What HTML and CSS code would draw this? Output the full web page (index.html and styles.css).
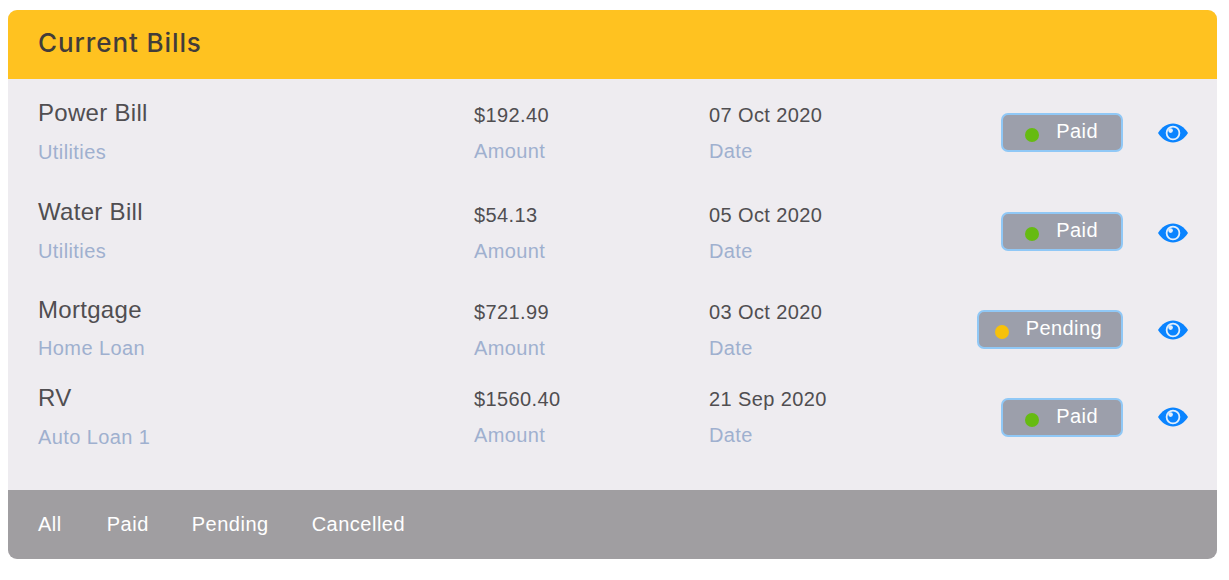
FILE: index.html
```html
<!DOCTYPE html>
<html>

<head>
    <title>Current Bills</title>
    <link rel="stylesheet" href="styles.css">
</head>

<body>

    <svg class="icon-defs" width="0" height="0">
        <symbol id="eye" viewBox="0 0 30 20">
            <path d="M0 10C4 4 9 .5 15 .5S26 4 30 10C26 16 21 19.500 15 19.500S4 16 0 10Z" fill="#0a84ff" />
            <circle cx="15" cy="10" r="6.400" fill="none" stroke="#e3effb" stroke-width="1.800" />
            <circle cx="12.600" cy="7.600" r="2.300" fill="#e3effb" />
        </symbol>
    </svg>

    <div class="card">
        <div class="card-header">
            <h1>Current Bills</h1>
        </div>

        <div class="bills">
            <div class="bill bill-first">
                <div class="bill-name">
                    <div class="title">Power Bill</div>
                    <div class="sub">Utilities</div>
                </div>
                <div class="bill-col amount">
                    <div class="value">$192.40</div>
                    <div class="sub">Amount</div>
                </div>
                <div class="bill-col date">
                    <div class="value">07 Oct 2020</div>
                    <div class="sub">Date</div>
                </div>
                <div class="status"><span class="dot dot-paid"></span>Paid</div>
                <svg class="eye"><use href="#eye" /></svg>
            </div>

            <div class="bill bill-second">
                <div class="bill-name">
                    <div class="title">Water Bill</div>
                    <div class="sub">Utilities</div>
                </div>
                <div class="bill-col amount">
                    <div class="value">$54.13</div>
                    <div class="sub">Amount</div>
                </div>
                <div class="bill-col date">
                    <div class="value">05 Oct 2020</div>
                    <div class="sub">Date</div>
                </div>
                <div class="status"><span class="dot dot-paid"></span>Paid</div>
                <svg class="eye"><use href="#eye" /></svg>
            </div>

            <div class="bill bill-third">
                <div class="bill-name">
                    <div class="title">Mortgage</div>
                    <div class="sub">Home Loan</div>
                </div>
                <div class="bill-col amount">
                    <div class="value">$721.99</div>
                    <div class="sub">Amount</div>
                </div>
                <div class="bill-col date">
                    <div class="value">03 Oct 2020</div>
                    <div class="sub">Date</div>
                </div>
                <div class="status status-pending"><span class="dot dot-pending"></span>Pending</div>
                <svg class="eye"><use href="#eye" /></svg>
            </div>

            <div class="bill bill-fourth">
                <div class="bill-name">
                    <div class="title">RV</div>
                    <div class="sub">Auto Loan 1</div>
                </div>
                <div class="bill-col amount">
                    <div class="value">$1560.40</div>
                    <div class="sub">Amount</div>
                </div>
                <div class="bill-col date">
                    <div class="value">21 Sep 2020</div>
                    <div class="sub">Date</div>
                </div>
                <div class="status"><span class="dot dot-paid"></span>Paid</div>
                <svg class="eye"><use href="#eye" /></svg>
            </div>
        </div>

        <div class="card-footer">
            <span>All</span>
            <span>Paid</span>
            <span>Pending</span>
            <span>Cancelled</span>
        </div>
    </div>

</body>

</html>
```

FILE: styles.css
```css
body {
    background-color: #fff;
    font-family: 'Liberation Sans', Arial, sans-serif;
    letter-spacing: 0.4px;
    margin: 0;
    padding: 10px 12px 21px 8px;
    overflow: hidden;
}

.icon-defs {
    display: block;
    height: 0;
}

.card {
    display: flex;
    flex-direction: column;
    height: 549px;
    background-color: #eeecf0;
    border-radius: 9px;
    overflow: hidden;
}

.card-header {
    height: 69px;
    box-sizing: border-box;
    padding: 0 30px 4px;
    display: flex;
    align-items: center;
    background-color: #ffc220;
    flex-shrink: 0;
}

.card-header h1 {
    margin: 0;
    font-family: 'Inter', sans-serif;
    font-size: 26px;
    font-weight: 500;
    letter-spacing: 0.9px;
    color: #423c3a;
}

.bills {
    flex: 1;
    padding: 18px 29px 0 30px;
}

.bill {
    display: flex;
    align-items: flex-start;
    height: 67px;
}

.bill-second {
    margin-top: 32px;
}

.bill-third {
    margin-top: 31px;
}

.bill-third .bill-name .sub {
    margin-top: 10px;
}

.bill-fourth {
    margin-top: 21px;
}

.bill-name {
    width: 436px;
}

.title {
    font-size: 24px;
    line-height: 32px;
    letter-spacing: 0.3px;
    color: #504e51;
}

.sub {
    margin-top: 11px;
    font-size: 20px;
    line-height: 24px;
    color: #9fb0cf;
}

.bill-col {
    padding-top: 6px;
}

.bill-second .bill-col {
    padding-top: 7px;
}

.bill-fourth .bill-col {
    padding-top: 5px;
}

.amount {
    width: 235px;
}

.date {
    width: 200px;
}

.value {
    font-size: 20px;
    line-height: 24px;
    color: #504e51;
}

.bill-col .sub {
    margin-top: 12px;
}

.status {
    margin: 16px 0 0 auto;
    height: 39px;
    box-sizing: border-box;
    padding: 0 23px 2px 22px;
    display: flex;
    align-items: center;
    gap: 17px;
    font-size: 20px;
    color: #fff;
    background-color: #9c9fab;
    border: 2px solid #90c8f6;
    border-radius: 7px;
}

.status-pending {
    padding: 0 19px 2px 16px;
}

.dot {
    width: 14px;
    height: 14px;
    margin-top: 6px;
    border-radius: 50%;
}

.dot-paid {
    background-color: #66bb12;
}

.dot-pending {
    background-color: #f7c10a;
}

.eye {
    width: 30px;
    height: 20px;
    margin: 26px 0 0 35px;
}

.bill-second .eye {
    margin-top: 27px;
}

.bill-fourth .eye {
    margin-top: 25px;
}

.card-footer {
    height: 69px;
    padding: 0 30px;
    display: flex;
    align-items: center;
    gap: 43px;
    font-size: 20px;
    letter-spacing: 0.5px;
    color: #fff;
    background-color: #a09ea1;
    flex-shrink: 0;
}

.card-footer span:first-child {
    margin-right: 2px;
}
```
